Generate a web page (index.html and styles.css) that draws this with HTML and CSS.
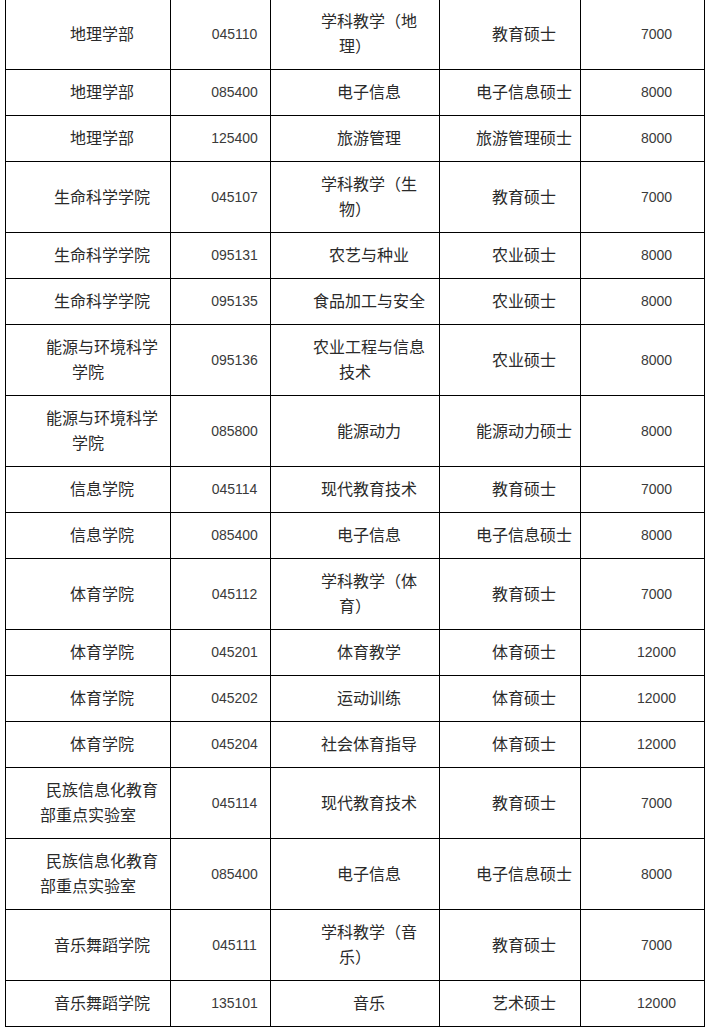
FILE: index.html
```html
<!DOCTYPE html>
<html lang="zh-CN">
<head>
<meta charset="utf-8">
<title>招生专业</title>
<link rel="stylesheet" href="styles.css">
</head>
<body>
<table class="grid">
  <colgroup>
    <col class="c1"><col class="c2"><col class="c3"><col class="c4"><col class="c5">
  </colgroup>
  <tbody>
    <tr><td>地理学部</td><td class="num">045110</td><td>学科教学（地<br>理）</td><td>教育硕士</td><td class="num">7000</td></tr>
    <tr><td>地理学部</td><td class="num">085400</td><td>电子信息</td><td>电子信息硕士</td><td class="num">8000</td></tr>
    <tr><td>地理学部</td><td class="num">125400</td><td>旅游管理</td><td>旅游管理硕士</td><td class="num">8000</td></tr>
    <tr><td>生命科学学院</td><td class="num">045107</td><td>学科教学（生<br>物）</td><td>教育硕士</td><td class="num">7000</td></tr>
    <tr><td>生命科学学院</td><td class="num">095131</td><td>农艺与种业</td><td>农业硕士</td><td class="num">8000</td></tr>
    <tr><td>生命科学学院</td><td class="num">095135</td><td>食品加工与安全</td><td>农业硕士</td><td class="num">8000</td></tr>
    <tr><td>能源与环境科学<br>学院</td><td class="num">095136</td><td>农业工程与信息<br>技术</td><td>农业硕士</td><td class="num">8000</td></tr>
    <tr><td>能源与环境科学<br>学院</td><td class="num">085800</td><td>能源动力</td><td>能源动力硕士</td><td class="num">8000</td></tr>
    <tr><td>信息学院</td><td class="num">045114</td><td>现代教育技术</td><td>教育硕士</td><td class="num">7000</td></tr>
    <tr><td>信息学院</td><td class="num">085400</td><td>电子信息</td><td>电子信息硕士</td><td class="num">8000</td></tr>
    <tr><td>体育学院</td><td class="num">045112</td><td>学科教学（体<br>育）</td><td>教育硕士</td><td class="num">7000</td></tr>
    <tr><td>体育学院</td><td class="num">045201</td><td>体育教学</td><td>体育硕士</td><td class="num">12000</td></tr>
    <tr><td>体育学院</td><td class="num">045202</td><td>运动训练</td><td>体育硕士</td><td class="num">12000</td></tr>
    <tr><td>体育学院</td><td class="num">045204</td><td>社会体育指导</td><td>体育硕士</td><td class="num">12000</td></tr>
    <tr><td>民族信息化教育<br>部重点实验室</td><td class="num">045114</td><td>现代教育技术</td><td>教育硕士</td><td class="num">7000</td></tr>
    <tr><td>民族信息化教育<br>部重点实验室</td><td class="num">085400</td><td>电子信息</td><td>电子信息硕士</td><td class="num">8000</td></tr>
    <tr><td>音乐舞蹈学院</td><td class="num">045111</td><td>学科教学（音<br>乐）</td><td>教育硕士</td><td class="num">7000</td></tr>
    <tr><td>音乐舞蹈学院</td><td class="num">135101</td><td>音乐</td><td>艺术硕士</td><td class="num">12000</td></tr>
  </tbody>
</table>
</body>
</html>
```
FILE: styles.css
```css
html, body {
  margin: 0;
  padding: 0;
  background: #ffffff;
}

.grid {
  margin: -2px 0 0 5px;
  width: 700px;
  table-layout: fixed;
  border-collapse: separate;
  border-spacing: 0;
  border-left: 1px solid #000;
  border-top: 1px solid #000;
  font-family: "Liberation Sans", "Noto Sans CJK SC", sans-serif;
  font-size: 16px;
  color: #2a2a2a;
}

.c1 { width: 165px; }
.c2 { width: 100px; }
.c3 { width: 169px; }
.c4 { width: 141px; }
.c5 { width: 124px; }

.grid td {
  box-sizing: border-box;
  border-right: 1px solid #000;
  border-bottom: 1px solid #000;
  padding: 10px 7px;
  line-height: 25px;
  text-align: center;
  text-indent: 28px;
  vertical-align: middle;
  white-space: nowrap;
}

.grid td.num {
  font-family: "Liberation Sans", sans-serif;
  font-size: 14px;
  color: #3a3a3a;
}
```
